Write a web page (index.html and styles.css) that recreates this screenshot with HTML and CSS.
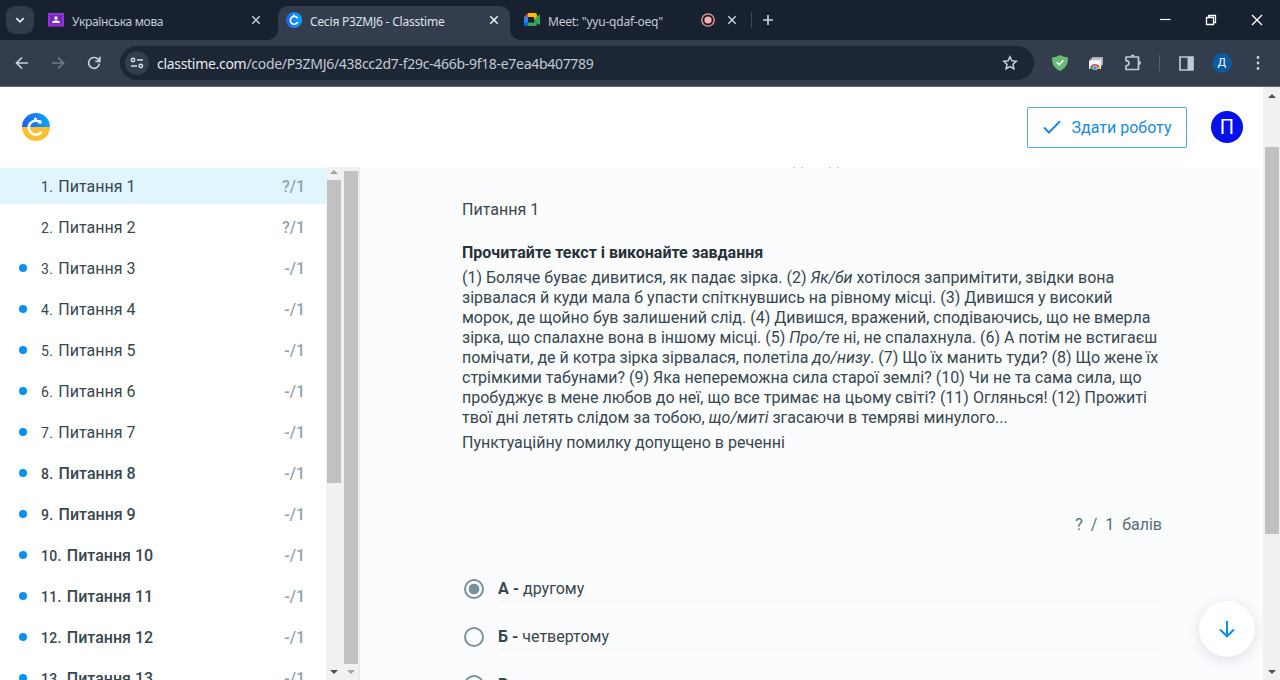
FILE: index.html
```html
<!DOCTYPE html>
<html lang="uk">
<head>
<meta charset="utf-8">
<title>Сесія P3ZMJ6 - Classtime</title>
<link rel="stylesheet" href="styles.css">
</head>
<body>
<div class="window">
  <div class="tabstrip">
    <div class="tab-search"><svg width="12" height="12" viewBox="0 0 12 12"><path d="M2.3 4.2 6 7.8l3.7-3.6" fill="none" stroke="#e4e8f0" stroke-width="1.8"/></svg></div>
    <div class="tab tab-first">
      <svg class="fav" width="16" height="16" viewBox="0 0 16 16"><path d="M0 1h16v13.500H0z" fill="#9334e0"/><path d="M2 3h12v9.500H2z" fill="#7627bb"/><circle cx="8" cy="6" r="1.700" fill="#fff"/><path d="M4 11c0-3.600 8-3.600 8 0z" fill="#fff"/></svg>
      <span class="tab-title t1">Українська мова</span>
      <svg class="close" width="10" height="10" viewBox="0 0 10 10"><path d="m1.300 1.300 7.400 7.400m0-7.400-7.400 7.400"/></svg>
    </div>
    <div class="tab tab-active">
      <svg class="fav" width="16" height="16" viewBox="0 0 16 16"><defs><linearGradient id="b"><stop stop-color="#1b62f5"/><stop offset="1" stop-color="#08a8fa"/></linearGradient></defs><circle cx="8" cy="8" r="8" fill="url(#b)"/><path d="M11.200 5.800A3.900 3.900 0 1 0 11.400 10.600M7.800 4.300V3.200" fill="none" stroke="#fff" stroke-width="1.700" stroke-linecap="round"/></svg>
      <span class="tab-title t2">Сесія P3ZMJ6 - Classtime</span>
      <svg class="close close-on" width="10" height="10" viewBox="0 0 10 10"><path d="m1.300 1.300 7.400 7.400m0-7.400-7.400 7.400"/></svg>
    </div>
    <div class="tab tab-last">
      <svg class="fav" width="16" height="14" viewBox="0 0 16 14"><path d="M4 0h7a2 2 0 0 1 2 2v5h-3V4H4z" fill="#fbbc04"/><path d="M0 4h4v6H0z" fill="#2684fc"/><path d="M4 0v4H0z" fill="#ea4335"/><path d="M0 9.500h4V13H1a1 1 0 0 1-1-1z" fill="#0066da"/><path d="M4 9.500h6.500V6l4.300-4c.5-.4 1.200 0 1.200.6v8.500c0 .6-.7 1-1.200.5L12.800 10v2a1 1 0 0 1-1 1H4z" fill="#34a853"/></svg>
      <span class="tab-title t3">Meet: "yyu-qdaf-oeq"</span>
      <svg class="record" width="14" height="14" viewBox="0 0 14 14"><circle cx="7" cy="7" r="6.200" fill="none" stroke="#ee9c9d" stroke-width="1.300"/><circle cx="7" cy="7" r="3.600" fill="#fab0b0"/></svg>
      <svg class="close" width="10" height="10" viewBox="0 0 10 10"><path d="m1.300 1.300 7.400 7.400m0-7.400-7.400 7.400"/></svg>
    </div>
    <i class="tab-divider"></i>
    <svg class="newtab" width="12" height="12" viewBox="0 0 12 12"><path d="M6 1v10M1 6h10" stroke="#ccd2df" stroke-width="1.700"/></svg>
    <div class="wincontrols">
      <svg width="12" height="12" viewBox="0 0 12 12"><path d="M1 5.500h10.500" stroke="#fff" stroke-width="1.200"/></svg>
      <svg width="12" height="12" viewBox="0 0 12 12"><path d="M1.500 3.500h7v7h-7zM3.800 3.300V1.500h6.700v7H8.700" fill="none" stroke="#fff" stroke-width="1.300"/></svg>
      <svg width="12" height="12" viewBox="0 0 12 12"><path d="m1 1 10 10M11 1 1 11" stroke="#fff" stroke-width="1.400"/></svg>
    </div>
  </div>
  <div class="toolbar">
    <svg class="nav" width="14" height="14" viewBox="0 0 14 14"><path d="M13 7H2M7 1.500 1.500 7 7 12.500" fill="none" stroke="#c9cfdc" stroke-width="1.700"/></svg>
    <svg class="nav" width="14" height="14" viewBox="0 0 14 14"><path d="M1 7h11M7 1.500 12.500 7 7 12.500" fill="none" stroke="#727989" stroke-width="1.600"/></svg>
    <svg class="nav reload" width="14" height="14" viewBox="0 0 14 14"><path d="M12.400 7.600A5.400 5.400 0 1 1 11 3.200L12.600 5M12.800.8V5.300H8.300" fill="none" stroke="#c9cfdc" stroke-width="1.700"/></svg>
    <div class="omnibox">
      <div class="site"><svg width="14" height="12" viewBox="0 0 14 12"><g fill="none" stroke="#d5dae5" stroke-width="1.500"><circle cx="3" cy="3" r="1.700"/><path d="M7 3h6M1 9h6"/><circle cx="10.800" cy="9" r="1.700"/></g></svg></div>
      <span class="url"><span class="host">classtime.com</span>/code/P3ZMJ6/438cc2d7-f29c-466b-9f18-e7ea4b407789</span>
      <svg class="star" width="16" height="16" viewBox="0 0 16 16"><path d="m8 1.800 1.900 4 4.400.5-3.300 3 .9 4.400L8 11.500l-3.900 2.200.9-4.400-3.300-3 4.400-.5z" fill="none" stroke="#cbd1de" stroke-width="1.500"/></svg>
    </div>
    <div class="exts">
      <svg width="16" height="16" viewBox="0 0 16 16"><path d="M0 2.500Q4 2 8 0q4 2 8 2.500c0 7-2 10.500-8 13.500C2 13 0 9.500 0 2.500" fill="#68bc71"/><path d="m4.800 7.300 2.400 2.400 4.300-4.500" fill="none" stroke="#fff" stroke-width="1.500"/></svg>
      <svg class="gallery" width="16" height="14" viewBox="0 0 16 14"><path d="M4 1h11v8H4z" fill="#a9acb2"/><path d="M2.500 2.500h11v8h-11z" fill="#c9cbce"/><path d="M1 4.500h12V13H1z" fill="#f4f4f4"/><path d="M2 13a5 5 0 0 1 10 0z" fill="#dc4639"/><path d="M2 13 3 10l3 3z" fill="#34a853"/><path d="M8 13l3.400-2.500.6 2.500z" fill="#fbbc04"/><circle cx="7" cy="12" r="2.200" fill="#4285f4" stroke="#fff" stroke-width=".6"/></svg>
      <svg class="puzzle" width="18" height="18" viewBox="0 0 18 18"><path d="M2 3h12.500v12.500H2v-3.700c4-.4 4-4.700 0-5.100z" fill="none" stroke="#c0c7d6" stroke-width="1.700" stroke-linejoin="round"/><path d="M6.700 2.600a2 2 0 0 1 4 0M15 7a2 2 0 0 1 0 4" fill="#c0c7d6"/></svg>
      <i class="divider"></i>
      <svg class="panel" width="15" height="15" viewBox="0 0 15 15"><path d="M1 1h13v13H1z" fill="none" stroke="#c0c7d6" stroke-width="1.700"/><path d="M8.500 1H14v13H8.500z" fill="#c0c7d6"/></svg>
      <div class="profile">Д</div>
      <svg class="more" width="4" height="16" viewBox="0 0 4 16" fill="#c9cfdc"><circle cx="2" cy="2.500" r="1.400"/><circle cx="2" cy="8" r="1.400"/><circle cx="2" cy="13.500" r="1.400"/></svg>
    </div>
  </div>
  <div class="page">
    <div class="content">
      <header class="header">
        <svg class="logo" width="28" height="28" viewBox="0 0 28 28"><path d="M0 14a14 14 0 0 1 28 0z" fill="url(#b)"/><path d="M0 14h28a14 14 0 0 1-28 0" fill="#fcc02e"/><path d="M18.200 9.300A7 7 0 1 0 19 19.300M13.400 7.500V5.800" fill="none" stroke="#fff" stroke-width="2.600" stroke-linecap="round"/><circle cx="17.800" cy="8.800" r="1.900" fill="#fff"/></svg>
        <div class="actions">
          <div class="submit"><svg width="18" height="14" viewBox="0 0 18 14"><path d="m1 7.500 5 5L17 1.200" fill="none" stroke="#168be0" stroke-width="2"/></svg><span>Здати роботу</span></div>
          <div class="avatar">П</div>
        </div>
      </header>
      <div class="columns">
        <aside class="questions">
          <div class="q current"><b class="dot"></b><span class="num">1.</span><span class="name">Питання 1</span><span class="score">?/1</span></div>
          <div class="q"><b class="dot"></b><span class="num">2.</span><span class="name">Питання 2</span><span class="score">?/1</span></div>
          <div class="q todo"><b class="dot"></b><span class="num">3.</span><span class="name">Питання 3</span><span class="score">-/1</span></div>
          <div class="q todo"><b class="dot"></b><span class="num">4.</span><span class="name">Питання 4</span><span class="score">-/1</span></div>
          <div class="q todo"><b class="dot"></b><span class="num">5.</span><span class="name">Питання 5</span><span class="score">-/1</span></div>
          <div class="q todo"><b class="dot"></b><span class="num">6.</span><span class="name">Питання 6</span><span class="score">-/1</span></div>
          <div class="q todo"><b class="dot"></b><span class="num">7.</span><span class="name">Питання 7</span><span class="score">-/1</span></div>
          <div class="q todo unseen"><b class="dot"></b><span class="num">8.</span><span class="name">Питання 8</span><span class="score">-/1</span></div>
          <div class="q todo unseen"><b class="dot"></b><span class="num">9.</span><span class="name">Питання 9</span><span class="score">-/1</span></div>
          <div class="q todo unseen"><b class="dot"></b><span class="num">10.</span><span class="name">Питання 10</span><span class="score">-/1</span></div>
          <div class="q todo unseen"><b class="dot"></b><span class="num">11.</span><span class="name">Питання 11</span><span class="score">-/1</span></div>
          <div class="q todo unseen"><b class="dot"></b><span class="num">12.</span><span class="name">Питання 12</span><span class="score">-/1</span></div>
          <div class="q todo unseen"><b class="dot"></b><span class="num">13.</span><span class="name">Питання 13</span><span class="score">-/1</span></div>
        </aside>
        <div class="scroll scroll-list"><i class="up"></i><i class="thumb"></i><i class="down"></i></div>
        <div class="scroll scroll-side"><i class="thumb"></i><i class="down"></i></div>
        <main class="main">
          <div class="feet"><i></i><i></i><i></i><i></i></div>
          <div class="label">Питання 1</div>
          <h1 class="heading">Прочитайте текст і виконайте завдання</h1>
          <p class="text">(1) Боляче буває дивитися, як падає зірка. (2) <em>Як/би</em> хотілося запримітити, звідки вона<br>зірвалася й куди мала б упасти спіткнувшись на рівному місці. (3) Дивишся у високий<br>морок, де щойно був залишений слід. (4) Дивишся, вражений, сподіваючись, що не вмерла<br>зірка, що спалахне вона в іншому місці. (5) <em>Про/те</em> ні, не спалахнула. (6) А потім не встигаєш<br>помічати, де й котра зірка зірвалася, полетіла <em>до/низу</em>. (7) Що їх манить туди? (8) Що жене їх<br>стрімкими табунами? (9) Яка непереможна сила старої землі? (10) Чи не та сама сила, що<br>пробуджує в мене любов до неї, що все тримає на цьому світі? (11) Оглянься! (12) Прожиті<br>твої дні летять слідом за тобою, <em>що/миті</em> згасаючи в темряві минулого...</p>
          <p class="text task">Пунктуаційну помилку допущено в реченні</p>
          <div class="points">?&nbsp; /&nbsp; 1&nbsp; балів</div>
          <div class="option"><i class="radio on"></i><div class="answer"><strong>А - </strong>другому</div></div>
          <div class="option"><i class="radio"></i><div class="answer"><strong>Б - </strong>четвертому</div></div>
          <div class="option"><i class="radio"></i><div class="answer"><strong>В - </strong></div></div>
          <div class="fab"><svg width="18" height="18" viewBox="0 0 18 18"><path d="M9 1v15M2 9.500l7 6.800 7-6.800" fill="none" stroke="#0c8ce9" stroke-width="2"/></svg></div>
        </main>
      </div>
    </div>
    <div class="scroll scroll-page"><i class="up"></i><i class="thumb"></i><i class="down"></i></div>
  </div>
</div>
</body>
</html>
```

FILE: styles.css
```css
* { box-sizing: border-box; }
body { margin: 0; font-family: Roboto, sans-serif; color: #37474f; }
.window { width: 1280px; height: 680px; overflow: hidden; display: flex; flex-direction: column; background: #fff; }
svg { display: block; flex: none; }

.tabstrip { height: 40px; flex: none; display: flex; align-items: center; background: #182130; font-family: "Noto Sans", sans-serif; }
.tab-search { width: 28px; height: 28px; margin-left: 6px; border-radius: 9px; background: #323b4b; display: grid; place-items: center; }
.tab { display: flex; align-items: center; height: 34px; margin-top: 6px; padding-bottom: 6px; }
.tab-first { width: 244px; padding-left: 14px; padding-right: 17px; }
.tab-active { width: 232px; padding-left: 8px; padding-right: 11px; background: #343d4e; border-radius: 10px 10px 0 0; position: relative; }
.tab-active::before, .tab-active::after { content: ""; position: absolute; bottom: 0; width: 10px; height: 10px; }
.tab-active::before { left: -10px; background: radial-gradient(circle at 0 0, #182130 9.5px, #343d4e 10px); }
.tab-active::after { right: -10px; background: radial-gradient(circle at 100% 0, #182130 9.5px, #343d4e 10px); }
.tab-last { width: 241px; padding-left: 14px; padding-right: 14px; }
.tab-title { margin-left: 8px; font-size: 12px; line-height: 16px; white-space: nowrap; color: #c3c9d6; padding-top: 3px; }
.t1 { letter-spacing: -.34px; }
.t2 { letter-spacing: -.22px; color: #dde1ea; }
.t3 { letter-spacing: -.22px; }
.close { margin-left: auto; fill: none; stroke: #c9cfdc; stroke-width: 1.5; }
.close-on { stroke: #f0f2f6; }
.record { margin-left: auto; }
.record + .close { margin-left: 12px; }
.tab-divider { width: 1px; height: 16px; background: #3d4657; }
.newtab { margin-left: 10px; }
.wincontrols { margin-left: auto; margin-right: 17px; display: flex; gap: 34px; }

.toolbar { height: 47px; flex: none; display: flex; align-items: center; background: #343d4e; border-bottom: 1px solid #626975; padding: 0 20px 0 15px; }
.nav { margin-right: 22px; }
.reload { margin-right: 19px; }
.omnibox { width: 914px; height: 34px; border-radius: 17px; background: #1d2635; display: flex; align-items: center; padding: 0 16px 0 5px; font-family: "Noto Sans", sans-serif; }
.site { width: 24px; height: 24px; border-radius: 50%; background: #343d4e; display: grid; place-items: center; }
.url { margin-left: 8px; font-size: 14px; letter-spacing: -.3px; color: #c3c9d4; white-space: nowrap; }
.host { color: #e8ebf1; }
.star { margin-left: auto; }
.exts { flex: 1; display: flex; align-items: center; margin-left: 18px; }
.gallery { margin-left: 20px; }
.puzzle { margin-left: 20px; }
.divider { width: 1px; height: 16px; background: #596171; margin-left: 17px; }
.panel { margin-left: 19px; }
.profile { width: 20px; height: 20px; margin-left: 18px; border-radius: 50%; background: #0b5a9d; color: #fff; font-size: 11px; line-height: 20px; text-align: center; }
.more { margin-left: auto; }

.page { flex: 1; min-height: 0; display: flex; }
.content { width: 1263px; display: flex; flex-direction: column; }
.header { height: 80px; flex: none; display: flex; align-items: center; justify-content: space-between; padding: 0 20px 0 22px; }
.actions { display: flex; align-items: center; gap: 24px; }
.submit { width: 160px; height: 41px; border: 1px solid #55a8e4; border-radius: 2px; color: #168be0; display: flex; align-items: center; justify-content: center; gap: 11px; font-size: 16px; white-space: nowrap; }
.avatar { width: 32px; height: 32px; border-radius: 50%; background: #0411e8; color: #fff; font-size: 20px; line-height: 32px; text-align: center; }
.columns { flex: 1; min-height: 0; display: flex; overflow: hidden; }

.questions { width: 326px; flex: none; padding-top: 1px; display: flex; flex-direction: column; gap: 5px; }
.q { height: 36px; flex: none; display: flex; align-items: center; padding: 1px 21px 0 19px; font-size: 16px; white-space: nowrap; }
.current { background: #e1f5fe; }
.dot { width: 8px; height: 8px; border-radius: 50%; margin: -2px 14px 0 0; }
.todo .dot { background: #0a90ee; }
.num { font-size: 14px; letter-spacing: .35px; }
.name { margin-left: 5px; }
.unseen { font-weight: 500; }
.score { margin-left: auto; font-weight: 500; color: #90a4ae; }

.scroll { width: 17px; flex: none; display: flex; flex-direction: column; align-items: center; background: #f1f1f1; }
.thumb { width: 14px; background: #c1c1c1; }
.up, .down { border: 4px solid transparent; border-top: 0; border-bottom: 4px solid #505050; }
.down { border-top: 4px solid #505050; border-bottom: 0; margin-top: auto; }
.scroll-list { padding: 3px 1px 6px 0; }
.scroll-list .up { border-bottom-color: #a3a3a3; }
.scroll-list .thumb { height: 303px; margin-top: 6px; }
.scroll-side { padding: 4px 0 6px; border-right: 1px solid #e4e6e8; }
.scroll-side .thumb { height: 493px; }
.scroll-side .down { border-top-color: #a3a3a3; }
.scroll-page { padding: 7px 0 6px; }
.scroll-page .thumb { height: 387px; margin-top: 49px; }

.main { flex: 1; min-width: 0; background: #fbfcfe; padding: 0 101px 0 102px; position: relative; font-size: 16px; white-space: nowrap; }
.feet { height: 1px; display: flex; margin-left: 331px; gap: 6px; }
.feet i { width: 2px; height: 1px; background: #c3c9cd; }
.feet i:nth-child(3) { margin-left: 20px; }
.label { margin-top: 32px; line-height: 20px; }
.heading { margin: 23px 0 0; font-size: 16px; line-height: 20px; font-weight: 700; color: #263238; }
.text { margin: 5px 0 0; line-height: 20px; }
.points { margin-top: 62px; line-height: 20px; text-align: right; color: #546e7a; }
.option { height: 48px; display: flex; align-items: flex-start; gap: 14px; padding-left: 2px; }
.points + .option { margin-top: 44px; }
.radio { width: 20px; height: 20px; border: 2px solid #78909c; border-radius: 50%; }
.on { background: radial-gradient(circle, #78909c 5px, transparent 5.7px); }
.answer { flex: 1; height: 23px; line-height: 20px; border-bottom: 1px solid #f0f2f4; white-space: pre; }
.fab { position: absolute; right: 8px; bottom: 23px; width: 56px; height: 56px; border-radius: 50%; background: #fff; display: grid; place-items: center; box-shadow: 0 3px 14px rgba(50, 75, 100, .16); }
```
